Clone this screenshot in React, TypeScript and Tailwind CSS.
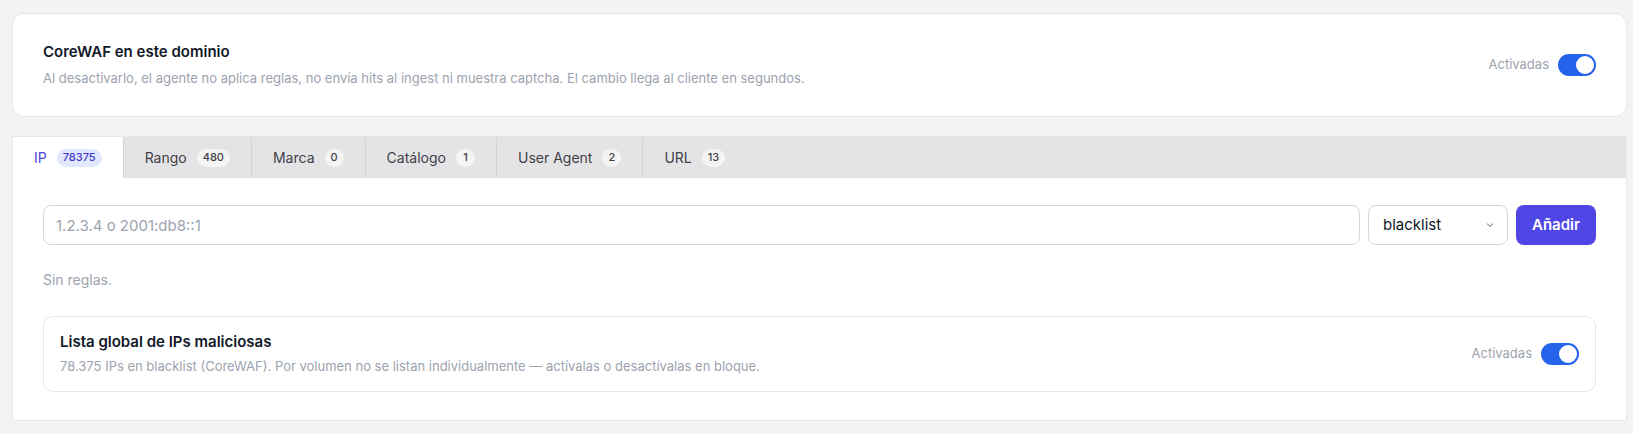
const tabs = [
  { label: "IP", count: "78375" },
  { label: "Rango", count: "480" },
  { label: "Marca", count: "0" },
  { label: "Catálogo", count: "1" },
  { label: "User Agent", count: "2" },
  { label: "URL", count: "13" },
];

function Toggle() {
  return (
    <span className="relative inline-flex h-[22px] w-[38px] items-center rounded-full bg-[#2563eb]">
      <span className="absolute right-[2px] h-[18px] w-[18px] rounded-full bg-white" />
    </span>
  );
}

function Switch() {
  return (
    <div className="flex items-center gap-[9px]">
      <span className="text-[13px] text-[#9ca3af]">Activadas</span>
      <Toggle />
    </div>
  );
}

export default function App() {
  return (
    <div
      className="min-h-[434px] bg-[#f3f3f3] pl-3 pr-[6px] pt-[13px] pb-[15px] flex flex-col gap-[19px]"
      style={{ fontFamily: "Inter, 'Noto Sans', sans-serif" }}
    >
      <div className="bg-white border border-[#e5e7eb] rounded-xl px-[30px] py-[28px] flex items-center justify-between">
        <div>
          <h2 className="text-[15px] leading-5 font-semibold text-[#111827]">CoreWAF en este dominio</h2>
          <p className="mt-1.5 text-[13px] leading-5 text-[#9ca3af]">
            Al desactivarlo, el agente no aplica reglas, no envía hits al ingest ni muestra captcha. El cambio llega al cliente en segundos.
          </p>
        </div>
        <Switch />
      </div>

      <div className="bg-white border border-[#e5e7eb]">
        <div className="flex h-[41px] bg-[#e4e4e7]">
          {tabs.map((t, i) => {
            const active = i === 0;
            return (
              <div
                key={t.label}
                className={
                  "flex items-center gap-[10px] px-[21px] text-sm " +
                  (active ? "bg-white text-[#4f46e5] " : "text-[#3f3f46] ") +
                  (i < tabs.length - 1 ? "border-r border-[#d4d4d8]" : "")
                }
              >
                <span>{t.label}</span>
                <span
                  className={
                    "rounded-full px-1.5 min-w-[19px] h-[18px] flex items-center justify-center text-[11px] font-medium " +
                    (active ? "bg-[#e0e7ff] text-[#4338ca]" : "bg-[#f4f4f5] text-[#3f3f46]")
                  }
                >
                  {t.count}
                </span>
              </div>
            );
          })}
        </div>

        <div className="px-[30px] pt-[27px] pb-[28px]">
          <div className="flex gap-2">
            <input
              placeholder="1.2.3.4 o 2001:db8::1"
              className="flex-1 h-10 rounded-lg border border-[#d1d5db] px-3 text-[15px] placeholder:text-[#9ca3af] outline-none"
            />
            <div className="w-[140px] h-10 rounded-lg border border-[#d1d5db] pl-[14px] pr-3 flex items-center justify-between">
              <span className="text-[15px] text-[#111827]">blacklist</span>
              <svg width="10" height="10" viewBox="0 0 10 10" fill="none" className="text-[#9ca3af]">
                <path d="M2.5 4l2.5 2.5L7.5 4" stroke="currentColor" strokeWidth="1.2" strokeLinecap="round" strokeLinejoin="round" />
              </svg>
            </div>
            <button className="w-[80px] h-10 rounded-lg bg-[#4f46e5] text-white text-[15px] font-semibold">Añadir</button>
          </div>

          <p className="mt-[25px] text-sm leading-5 text-[#9ca3af]">Sin reglas.</p>

          <div className="mt-[26px] border border-[#e5e7eb] rounded-[10px] px-4 py-[15px] flex items-center justify-between">
            <div>
              <h3 className="text-[15px] leading-5 font-semibold text-[#111827]">Lista global de IPs maliciosas</h3>
              <p className="mt-1 text-[13px] leading-5 text-[#9ca3af]">
                78.375 IPs en blacklist (CoreWAF). Por volumen no se listan individualmente — actívalas o desactívalas en bloque.
              </p>
            </div>
            <Switch />
          </div>
        </div>
      </div>
    </div>
  );
}
